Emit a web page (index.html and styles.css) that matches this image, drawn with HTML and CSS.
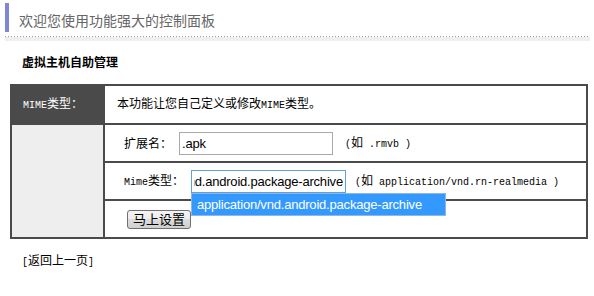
FILE: index.html
```html
<!DOCTYPE html>
<html lang="zh-CN">
<head>
  <meta charset="UTF-8" />
  <title>控制面板 - MIME类型</title>
  <link rel="stylesheet" href="styles.css">
</head>
<body>
  <div class="page">
    <div class="head">
      <h1 class="title">欢迎您使用功能强大的控制面板</h1>
    </div>
    <div class="rule"></div>

    <h2 class="subtitle">虚拟主机自助管理</h2>

    <!-- MIME form -->
    <form class="mime-form" onsubmit="return false">
      <table class="mime-table">
        <tr>
          <th class="label-cell"><span class="en">MIME</span>类型：</th>
          <td class="intro">本功能让您自己定义或修改<span class="en">MIME</span>类型。</td>
        </tr>
        <tr>
          <td class="side" rowspan="3"></td>
          <td class="field">
            <div class="field-line">
              <span class="field-name">扩展名：</span>
              <input type="text" class="text-input" name="ext" value=".apk" />
              <span class="hint"><span class="en">(</span>如<span class="en"> .rmvb )</span></span>
            </div>
          </td>
        </tr>
        <tr>
          <td class="field">
            <div class="field-line">
              <span class="field-name wide"><span class="en">Mime</span>类型：</span>
              <span class="suggest-wrap">
                <input type="text" class="text-input active" id="mimeType" name="mime" value="application/vnd.android.package-archive" />
                <span class="suggest">application/vnd.android.package-archive</span>
              </span>
              <span class="hint far"><span class="en">(</span>如<span class="en"> application/vnd.rn-realmedia )</span></span>
            </div>
          </td>
        </tr>
        <tr>
          <td class="field action">
            <button type="submit" class="submit-btn">马上设置</button>
          </td>
        </tr>
      </table>
    </form>

    <p class="back"><span class="en">[</span>返回上一页<span class="en">]</span></p>
  </div>

  <script>
    // keep the end of the typed value in view
    var mime = document.getElementById("mimeType");
    mime.focus();
    mime.setSelectionRange(mime.value.length, mime.value.length);
    mime.scrollLeft = mime.scrollWidth;
  </script>
</body>
</html>
```

FILE: styles.css
```css
* {
  box-sizing: border-box;
  margin: 0;
  padding: 0;
}

body {
  font-family: "Noto Sans CJK SC", sans-serif;
  font-size: 12px;
  line-height: 16px;
  color: #000;
  background: #fff;
}

.en {
  font-family: "Liberation Mono", monospace;
  font-size: 10px;
}

.page {
  padding: 0 4px 0 5px;
}

.head {
  padding: 3px 0 4px;
}

.title {
  height: 29px;
  padding: 5px 0 0 10px;
  border-left: 4px solid #8086d4;
  font-size: 14px;
  font-weight: normal;
  line-height: 24px;
  color: #666;
}

.rule {
  height: 5px;
  background:
    repeating-linear-gradient(90deg, #999 0 1px, transparent 1px 3px) top left / 100% 1px no-repeat,
    linear-gradient(#efefef, #efefef) bottom left / 100% 4px no-repeat;
}

.subtitle {
  margin: 13px 0 0 17px;
  font-size: 12px;
  line-height: 16px;
  font-weight: bold;
}

.mime-table {
  margin: 14px 0 0 5px;
  width: 578px;
  border-collapse: collapse;
}

.mime-table th,
.mime-table td {
  border: 2px solid #4a4a4a;
}

.label-cell {
  width: 93px;
  height: 39px;
  padding-left: 11px;
  background: #4a4a4a;
  color: #fff;
  text-align: left;
  font-weight: normal;
}

.intro {
  padding-left: 12px;
}

.side {
  background: #eee;
}

.field {
  height: 38px;
  padding-left: 19px;
}

.field-line {
  display: flex;
  align-items: center;
}

.field-name {
  width: 55px;
}

.field-name.wide {
  width: 67px;
}

.text-input {
  width: 154px;
  height: 23px;
  padding: 0 2px;
  border: 1px solid #a9a9a9;
  font-family: "Liberation Sans", sans-serif;
  font-size: 13px;
  letter-spacing: -0.2px;
  color: #000;
  outline: none;
}

.text-input.active {
  width: 155px;
  border-color: #5e9fdc;
}

.hint {
  margin-left: 12px;
}

.hint.far {
  margin-left: 9px;
}

.suggest-wrap {
  position: relative;
  display: flex;
}

.suggest {
  position: absolute;
  top: 100%;
  left: 0;
  width: 255px;
  height: 23px;
  padding-left: 5px;
  border: 1px solid #8fb8e0;
  background: #3399ff;
  color: #fff;
  font-family: "Liberation Sans", sans-serif;
  font-size: 13px;
  letter-spacing: -0.2px;
  line-height: 21px;
  white-space: nowrap;
}

.action {
  padding-left: 22px;
}

.submit-btn {
  width: 64px;
  height: 19px;
  border: 1px solid #707070;
  border-radius: 3px;
  background: linear-gradient(#f4f4f4, #ebebeb 50%, #dddddd 50%, #cfcfcf);
  font-family: "Noto Sans CJK SC", sans-serif;
  font-size: 13px;
  line-height: 16px;
  color: #000;
}

.back {
  margin: 13px 0 0 17px;
}
```
